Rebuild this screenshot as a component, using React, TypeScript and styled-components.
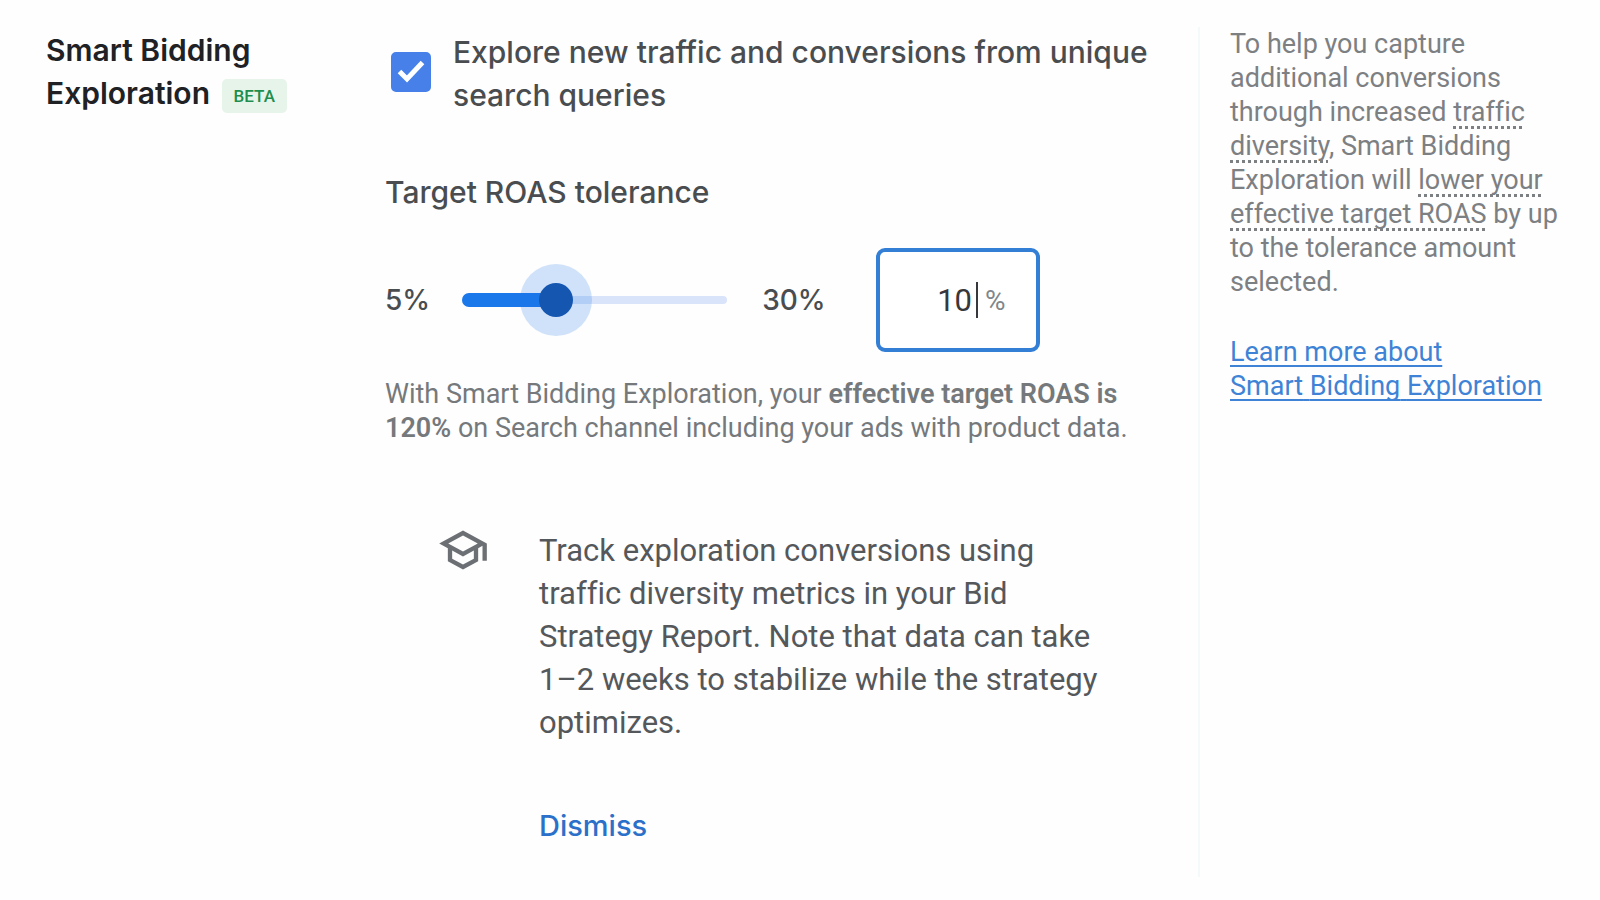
import React, { useState } from "react";
import styled, { createGlobalStyle } from "styled-components";
import { MdOutlineSchool } from "react-icons/md";

const TOLERANCES = [5, 10, 20, 30];
const THUMB = 34;

const display = `"Google Sans", Inter, sans-serif`;
const body = `Roboto, sans-serif`;

const GlobalStyle = createGlobalStyle`
  *, *::before, *::after { box-sizing: border-box; }
  body { margin: 0; background: #fefefe; font-family: ${body}; }
  h2, h3, p { margin: 0; }
`;

const Page = styled.main`
  display: grid;
  grid-template-columns: 339px minmax(0, 1fr) 402px;
  padding: 27px 0 22px 46px;
`;

const Title = styled.h2`
  padding: 2px 40px 0 0;
  font: 600 30px/43px ${display};
  color: #202124;
`;

const BetaBadge = styled.span`
  display: inline-block;
  margin-left: 4px;
  padding: 0 12px;
  border-radius: 5px;
  background: #e6f4ea;
  color: #1e8e4e;
  font: 500 17px/34px ${body};
  vertical-align: middle;
`;

const Settings = styled.section`
  padding: 4px 20px 0 0;
`;

const ExploreOption = styled.label`
  display: flex;
  align-items: flex-start;
  gap: 22px;
  padding-left: 6px;
  font: 500 30px/43px ${display};
  font-variant-ligatures: none;
  color: #4a4d50;
  cursor: pointer;
`;

const CheckboxFrame = styled.span`
  display: grid;
  flex: none;
  margin-top: 21px;

  > * {
    grid-area: 1 / 1;
  }

  svg {
    pointer-events: none;
  }
`;

const Checkbox = styled.input`
  appearance: none;
  width: 40px;
  height: 40px;
  margin: 0;
  border: 2px solid #5f6368;
  border-radius: 5px;
  cursor: pointer;

  &:checked {
    border-color: #4680e8;
    background: #4680e8;
  }
`;

const SubHeading = styled.h3`
  margin-top: 54px;
  font: 500 30px/43px ${display};
  color: #4a4d50;
`;

const ToleranceRow = styled.div`
  display: flex;
  align-items: center;
  margin-top: 34px;
`;

const Bound = styled.span`
  font: 500 28px/43px ${display};
  color: #4a4d50;
`;

const Slider = styled.div`
  display: grid;
  align-items: center;
  width: 265px;
  height: 72px;
  margin: 0 35px 0 32px;

  > * {
    grid-area: 1 / 1;
  }
`;

const Track = styled.span`
  height: 8px;
  border-radius: 4px;
  background: #d9e4fb;
`;

const Fill = styled.span`
  height: 14px;
  border-radius: 7px;
  background: #1a78ea;
`;

const Range = styled.input`
  appearance: none;
  width: 100%;
  height: 72px;
  margin: 0;
  background: transparent;
  outline: none;
  cursor: pointer;

  &::-webkit-slider-thumb {
    appearance: none;
    width: ${THUMB}px;
    height: ${THUMB}px;
    border-radius: 50%;
    background: #1556b0;
    box-shadow: 0 0 0 19px rgba(26, 115, 232, 0.2);
  }
`;

const PercentField = styled.label`
  display: flex;
  align-items: center;
  width: 164px;
  height: 104px;
  margin-left: 50px;
  padding-right: 30px;
  border: 4px solid #347fd6;
  border-radius: 9px;
  background: #fff;
`;

const PercentInput = styled.input`
  flex: 1;
  min-width: 0;
  padding: 0;
  border: 0;
  outline: none;
  background: transparent;
  font: 400 31px/43px ${body};
  color: #36383b;
  text-align: right;
  caret-color: transparent;
`;

const Caret = styled.span`
  width: 2px;
  height: 36px;
  margin: 0 7px 0 4px;
  background: #36383b;
`;

const Unit = styled.span`
  font: 400 28px/43px ${body};
  color: #80868b;
`;

const Help = styled.p`
  max-width: 760px;
  margin-top: 25px;
  font: 400 27px/34px ${body};
  font-variant-ligatures: none;
  color: #75797c;

  strong {
    font-weight: 600;
  }
`;

const Tip = styled.div`
  display: flex;
  align-items: flex-start;
  gap: 50px;
  margin-top: 84px;
  padding-left: 52px;
`;

const TipIcon = styled(MdOutlineSchool)`
  flex: none;
  width: 52px;
  height: 52px;
  margin-top: -5px;
  color: #6c6f73;
`;

const TipText = styled.p`
  max-width: 570px;
  font: 400 31px/43px ${body};
  font-variant-ligatures: none;
  color: #55585b;
`;

const DismissButton = styled.button`
  display: block;
  margin-top: 60px;
  padding: 0;
  border: 0;
  background: none;
  color: #2b70c9;
  font: 500 29px/43px ${display};
  cursor: pointer;
`;

const Aside = styled.aside`
  min-height: 850px;
  padding-left: 30px;
  border-left: 2px solid #f4f9fa;
  font: 400 27px/34px ${body};
  font-variant-ligatures: none;
  color: #7d8083;
`;

const SideText = styled.p`
  max-width: 345px;
  margin-bottom: 36px;
`;

const Term = styled.span`
  text-decoration: underline dotted 3px;
  text-underline-offset: 5px;
  text-decoration-skip-ink: none;
`;

const LearnMore = styled.a`
  display: block;
  max-width: 330px;
  color: #3f83d6;
  text-decoration: underline 2px;
  text-underline-offset: 4px;
  text-decoration-skip-ink: none;
`;

export default function App() {
  const [enabled, setEnabled] = useState(true);
  const [step, setStep] = useState(1);
  const [dismissed, setDismissed] = useState(false);
  const ratio = step / (TOLERANCES.length - 1);
  const tolerance = TOLERANCES[step];

  return (
    <>
      <GlobalStyle />
      <Page>
        <Title>
          Smart Bidding Exploration <BetaBadge>BETA</BetaBadge>
        </Title>

        <Settings>
          <ExploreOption>
            <CheckboxFrame>
              <Checkbox type="checkbox" checked={enabled} onChange={(e) => setEnabled(e.target.checked)} />
              {enabled && (
                <svg width="40" height="40" viewBox="0 0 40 40" fill="none" stroke="#fff" strokeWidth="5" aria-hidden="true">
                  <path d="M8.5 19.5 16 27 31.5 10.5" />
                </svg>
              )}
            </CheckboxFrame>
            <span>Explore new traffic and conversions from unique search queries</span>
          </ExploreOption>

          <SubHeading id="tolerance-heading">Target ROAS tolerance</SubHeading>
          <ToleranceRow>
            <Bound>5%</Bound>
            <Slider>
              <Track />
              <Fill style={{ width: `calc(${THUMB / 2}px + (100% - ${THUMB}px) * ${ratio})` }} />
              <Range
                type="range"
                min={0}
                max={TOLERANCES.length - 1}
                value={step}
                aria-labelledby="tolerance-heading"
                aria-valuetext={`${tolerance}%`}
                onChange={(e) => setStep(Number(e.target.value))}
              />
            </Slider>
            <Bound>30%</Bound>
            <PercentField>
              <PercentInput type="text" value={tolerance} readOnly aria-labelledby="tolerance-heading" />
              <Caret />
              <Unit>%</Unit>
            </PercentField>
          </ToleranceRow>
          <Help>
            With Smart Bidding Exploration, your <strong>effective target ROAS is 120%</strong> on Search channel
            including your ads with product data.
          </Help>

          {!dismissed && (
            <Tip>
              <TipIcon aria-hidden="true" />
              <div>
                <TipText>
                  Track exploration conversions using traffic diversity metrics in your Bid Strategy Report. Note that
                  data can take 1–2 weeks to stabilize while the strategy optimizes.
                </TipText>
                <DismissButton type="button" onClick={() => setDismissed(true)}>
                  Dismiss
                </DismissButton>
              </div>
            </Tip>
          )}
        </Settings>

        <Aside>
          <SideText>
            To help you capture additional conversions through increased <Term>traffic diversity</Term>, Smart Bidding
            Exploration will <Term>lower your effective target ROAS</Term> by up to the tolerance amount selected.
          </SideText>
          <LearnMore href="#learn-more">Learn more about Smart{"\u00a0"}Bidding{"\u00a0"}Exploration</LearnMore>
        </Aside>
      </Page>
    </>
  );
}
